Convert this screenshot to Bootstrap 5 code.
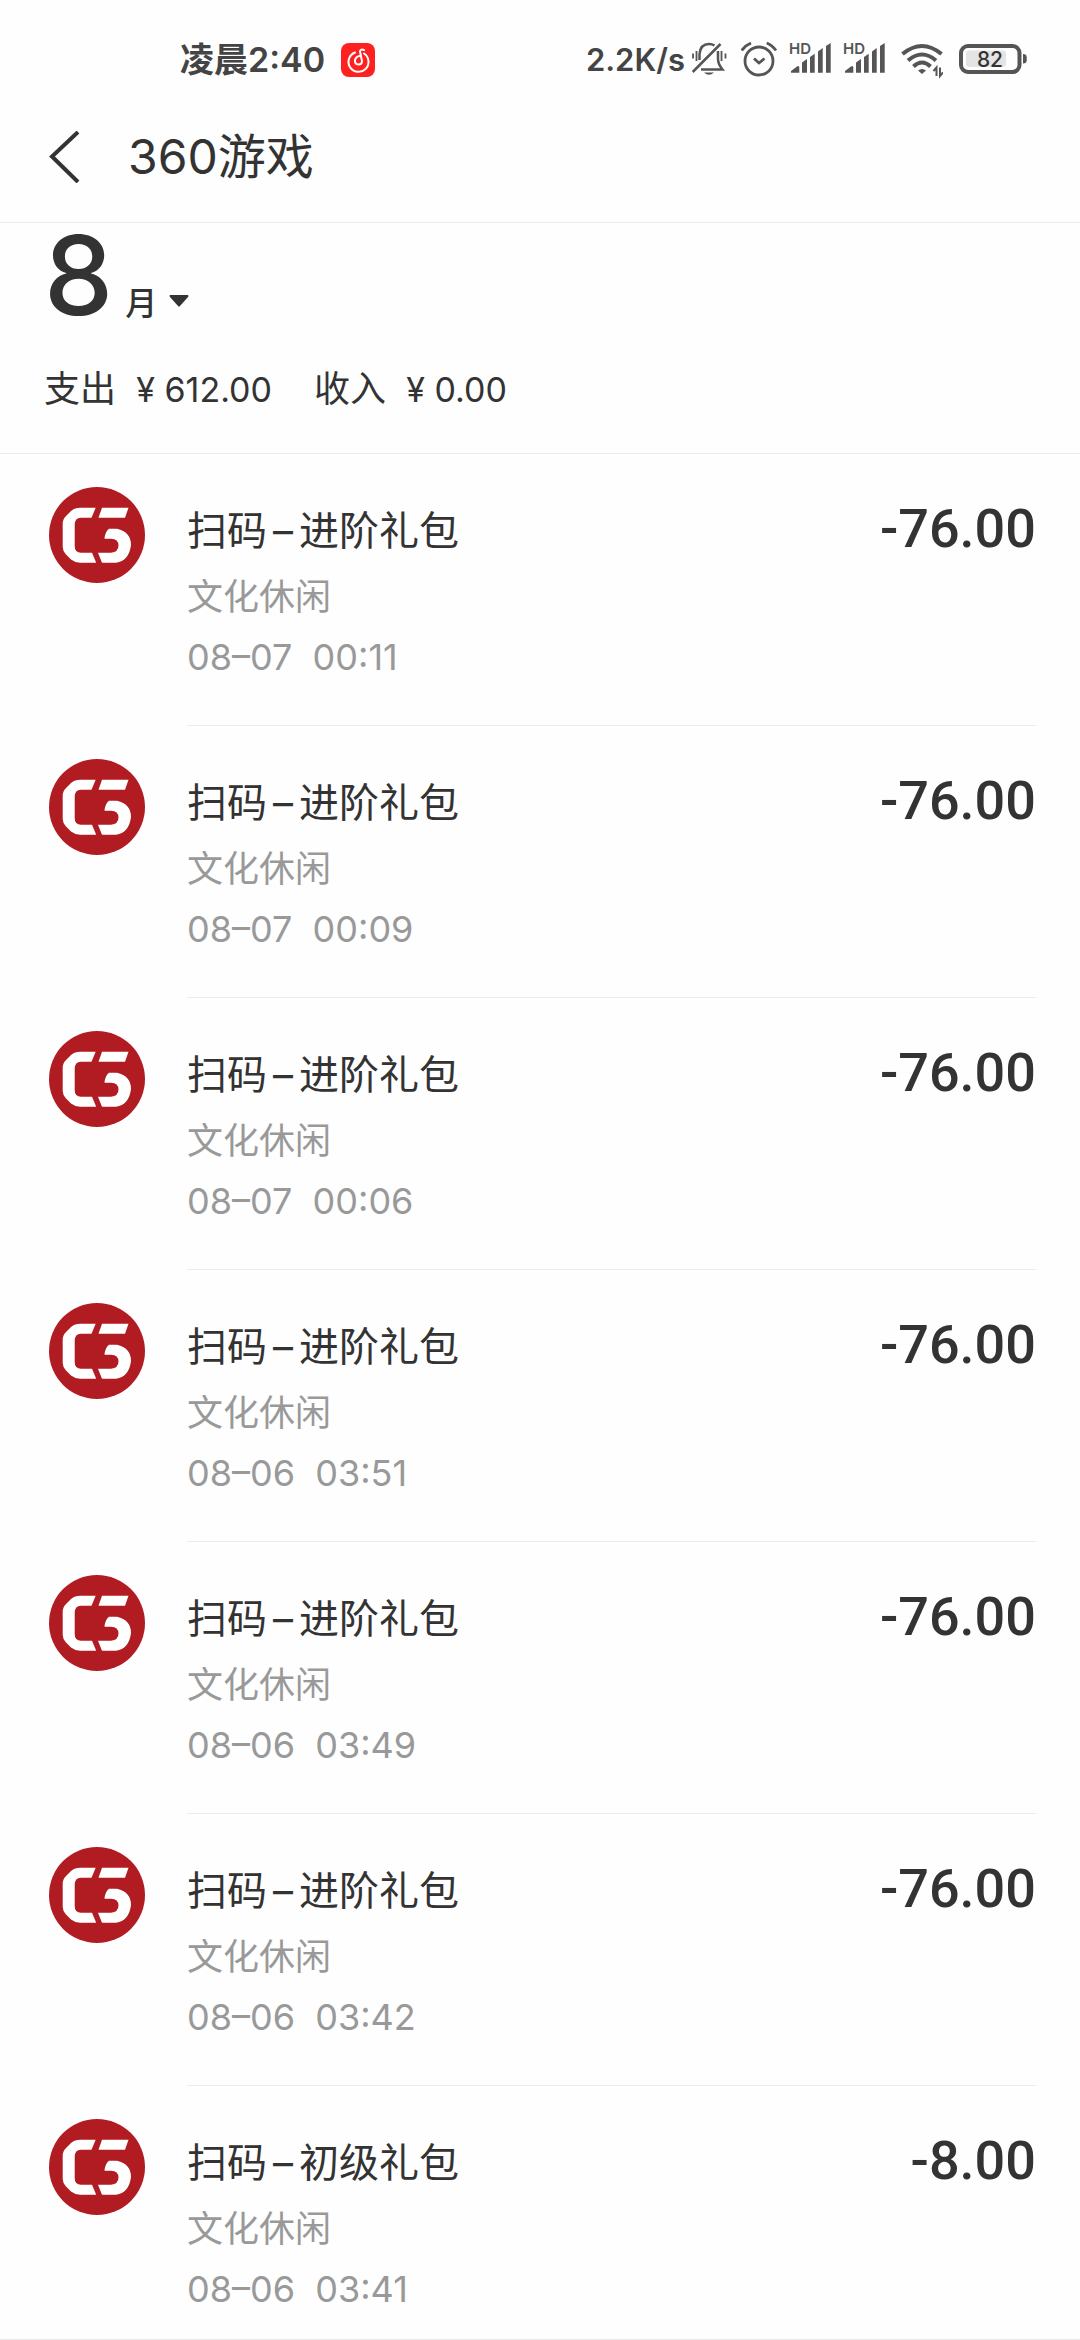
<!DOCTYPE html>
<html lang="zh-CN">
<head>
<meta charset="utf-8">
<meta name="viewport" content="width=device-width, initial-scale=1">
<title>360游戏</title>
<link href="https://cdn.jsdelivr.net/npm/bootstrap@5.3.0/dist/css/bootstrap.min.css" rel="stylesheet">
<style>
  body { background: #fefefe; color: #333; font-family: Inter, "Noto Sans CJK SC", sans-serif; font-size: 36px; line-height: 60px; }
  .status-bar { height: 92px; padding: 28px 53px 0 180px; font-size: 34px; font-weight: 600; color: #444; }
  .status-icons { gap: 12px; }
  .status-bar svg { display: block; flex: none; }
  .speed { font-size: 31px; margin-right: 6px; }
  .app-header { height: 131px; padding: 0 44px; border-bottom: 1px solid #ebebeb; }
  .back-btn { width: 84px; color: inherit; }
  .app-title { font-size: 48px; line-height: 60px; font-weight: 400; }
  .summary { height: 231px; padding: 4px 44px 0; border-bottom: 1px solid #ebebeb; }
  .month-btn { color: inherit; font-weight: 500; gap: 12px; }
  .month-num { font-size: 110px; line-height: 96px; }
  .month-unit { font-size: 32px; line-height: 40px; }
  .totals { gap: 42px; margin-top: 35px; }
  .sum { font-size: 34px; }
  .record { padding: 0 44px 0 49px; gap: 42px; color: #333; }
  .record:hover { color: #333; }
  .record-logo { width: 96px; height: 96px; margin-top: 33px; flex: none; }
  .record-body { height: 272px; padding-top: 47px; border-bottom: 1px solid #ebebeb; }
  .record-title { font-size: 40px; margin-bottom: 6px; }
  .record-title span { margin: 0 6px; }
  .record-note { color: #999; }
  .amount { font-family: Roboto, sans-serif; font-size: 54px; font-weight: 500; line-height: 56px; }
  .records li:last-child { border-bottom: 1px solid #ebebeb; }
  .records li:last-child .record-body { height: 253px; border-bottom: 0; }
</style>
</head>
<body>
<svg class="d-none" aria-hidden="true">
  <symbol id="logo" viewBox="0 0 96 96">
    <circle cx="48" cy="48" r="48" fill="#b11b22"/>
    <g fill="#fff">
      <path d="M46.700 20.700H31Q26 20.700 22 24L17 29Q13.700 32 13.700 37V60Q13.700 64 17 67.500L22 72.500Q26 75.700 31 75.700H47.200L43 65.700H32Q25.700 65.700 25.700 59V38Q25.700 30.700 32 30.700H42.500Z"/>
      <path d="M53 20.700H79.500L76 30.700H49.500Z"/>
      <path d="M60 41.700H68Q82 45 82 58Q80 74 67 75.700H53L49 65.700H62Q69.500 65 69.500 58.500Q69.500 52 62 51.700H55.500Q56 45 60 41.700Z"/>
    </g>
  </symbol>
  <symbol id="signal" viewBox="0 0 42 40">
    <text x="0" y="14" font-family="Inter, sans-serif" font-size="15" font-weight="600" fill="#555">HD</text>
    <path d="M2 32.700V31L8 26.500Q10.300 25 10.300 27.500V32.700ZM13 32.700V22.500L18 19V32.700ZM21 32.700V17L25.700 13.700V32.700ZM29 32.700V11.500L33.700 8V32.700ZM37 32.700V6L41.700 3V32.700Z" fill="#555"/>
  </symbol>
</svg>

<div class="status-bar d-flex justify-content-between">
  <div class="d-flex align-items-center">
    <span>凌晨2:40</span>
    <svg class="ms-3" width="34" height="34" viewBox="0 0 34 34" aria-hidden="true">
      <rect width="34" height="34" rx="8" fill="#fd221f"/>
      <path d="M14 9.500A10 10 0 1 0 23 10.500M23 7Q19.500 5.500 19 8.500L21 18Q21 21.500 17.500 21.500Q13.500 21 14 17Q15 13 20 12.700" fill="none" stroke="#fff" stroke-width="2" stroke-linecap="round"/>
    </svg>
  </div>
  <div class="d-flex align-items-center">
    <span class="speed">2.2K/s</span>
    <div class="status-icons d-flex align-items-center">
      <svg width="38" height="40" viewBox="0 0 38 40" fill="none" stroke="#555" stroke-width="2.500" aria-hidden="true">
        <path d="M8.500 20V14Q9.500 4 18 4Q21 4 23.500 5.500M27 11V19Q27 24 31.500 29.500H10M1.700 32L29.500 4"/>
        <path d="M2 13.500V18.500M5.500 11V21M30.500 11V21M34.500 13.500V18.500" stroke-width="1.800"/>
        <path d="M13 32.500H23Q18 37 13 32.500Z" fill="#555" stroke="none"/>
      </svg>
      <svg width="36" height="40" viewBox="1 0 36 40" fill="none" stroke="#555" stroke-width="2.800" aria-hidden="true">
        <circle cx="19" cy="21" r="14"/>
        <path d="M1.700 10.500Q5 5.500 11 3M26.700 3Q32 5 36 10.500M14 18.500L19 23L24.500 18.500"/>
      </svg>
      <svg width="42" height="40" aria-hidden="true"><use href="#signal"/></svg>
      <svg width="42" height="40" aria-hidden="true"><use href="#signal"/></svg>
      <svg width="46" height="40" viewBox="-4 0 46 40" fill="none" stroke="#555" stroke-width="4" aria-hidden="true">
        <path d="M1.500 14Q21 -2 40.500 14M7 20.500Q21 8.500 35 20.500M12.500 26.500Q21 18.500 29.500 26.500"/>
        <path d="M17 30.500Q21 27.500 25 30.500L21 34Z" fill="#555" stroke="none"/>
        <path d="M35.500 36V27.500L32.500 31M39 27.500V36L42 32.500" stroke-width="2"/>
      </svg>
      <svg width="72" height="40" viewBox="-3 0 72 40" aria-hidden="true">
        <rect x="8" y="10.500" width="40" height="16.500" rx="3" fill="#e4e4e4"/>
        <rect x="3" y="6" width="58.500" height="26" rx="7" fill="none" stroke="#555" stroke-width="4"/>
        <path d="M65 14Q68.700 14 68.700 17V20.500Q68.700 23.500 65 23.500Z" fill="#555"/>
        <text x="32" y="27" text-anchor="middle" font-family="Inter, sans-serif" font-size="21" font-weight="500" fill="#333">82</text>
      </svg>
    </div>
  </div>
</div>

<header class="app-header d-flex align-items-center">
  <button type="button" class="back-btn btn border-0 p-0 text-start" aria-label="返回">
    <svg class="d-block" width="40" height="52" viewBox="0 0 40 52" fill="none" stroke="#333" stroke-width="4"><path d="M34 1L8 25.500L34 51"/></svg>
  </button>
  <h1 class="app-title m-0">360游戏</h1>
</header>

<section class="summary">
  <button type="button" class="month-btn btn border-0 p-0 d-flex align-items-baseline">
    <span class="month-num">8</span>
    <span class="month-unit">月</span>
    <svg width="20" height="20" viewBox="0 0 20 20" aria-hidden="true"><path d="M1 0H19Q20 1 19 2L11 11Q10 12 9 11L1 2Q0 1 1 0Z" fill="#333"/></svg>
  </button>
  <div class="totals d-flex">
    <span>支出&nbsp; <span class="sum">¥ 612.00</span></span>
    <span>收入&nbsp; <span class="sum">¥ 0.00</span></span>
  </div>
</section>

<main>
  <ul class="records list-unstyled m-0">
    <li><a href="#" class="record d-flex text-decoration-none">
      <svg class="record-logo" aria-hidden="true"><use href="#logo"/></svg>
      <div class="record-body d-flex flex-grow-1 justify-content-between">
        <div><div class="record-title">扫码<span>–</span>进阶礼包</div><div class="record-note">文化休闲</div><div class="record-note">08–07&nbsp; 00:11</div></div>
        <div class="amount">-76.00</div>
      </div></a></li>
    <li><a href="#" class="record d-flex text-decoration-none">
      <svg class="record-logo" aria-hidden="true"><use href="#logo"/></svg>
      <div class="record-body d-flex flex-grow-1 justify-content-between">
        <div><div class="record-title">扫码<span>–</span>进阶礼包</div><div class="record-note">文化休闲</div><div class="record-note">08–07&nbsp; 00:09</div></div>
        <div class="amount">-76.00</div>
      </div></a></li>
    <li><a href="#" class="record d-flex text-decoration-none">
      <svg class="record-logo" aria-hidden="true"><use href="#logo"/></svg>
      <div class="record-body d-flex flex-grow-1 justify-content-between">
        <div><div class="record-title">扫码<span>–</span>进阶礼包</div><div class="record-note">文化休闲</div><div class="record-note">08–07&nbsp; 00:06</div></div>
        <div class="amount">-76.00</div>
      </div></a></li>
    <li><a href="#" class="record d-flex text-decoration-none">
      <svg class="record-logo" aria-hidden="true"><use href="#logo"/></svg>
      <div class="record-body d-flex flex-grow-1 justify-content-between">
        <div><div class="record-title">扫码<span>–</span>进阶礼包</div><div class="record-note">文化休闲</div><div class="record-note">08–06&nbsp; 03:51</div></div>
        <div class="amount">-76.00</div>
      </div></a></li>
    <li><a href="#" class="record d-flex text-decoration-none">
      <svg class="record-logo" aria-hidden="true"><use href="#logo"/></svg>
      <div class="record-body d-flex flex-grow-1 justify-content-between">
        <div><div class="record-title">扫码<span>–</span>进阶礼包</div><div class="record-note">文化休闲</div><div class="record-note">08–06&nbsp; 03:49</div></div>
        <div class="amount">-76.00</div>
      </div></a></li>
    <li><a href="#" class="record d-flex text-decoration-none">
      <svg class="record-logo" aria-hidden="true"><use href="#logo"/></svg>
      <div class="record-body d-flex flex-grow-1 justify-content-between">
        <div><div class="record-title">扫码<span>–</span>进阶礼包</div><div class="record-note">文化休闲</div><div class="record-note">08–06&nbsp; 03:42</div></div>
        <div class="amount">-76.00</div>
      </div></a></li>
    <li><a href="#" class="record d-flex text-decoration-none">
      <svg class="record-logo" aria-hidden="true"><use href="#logo"/></svg>
      <div class="record-body d-flex flex-grow-1 justify-content-between">
        <div><div class="record-title">扫码<span>–</span>初级礼包</div><div class="record-note">文化休闲</div><div class="record-note">08–06&nbsp; 03:41</div></div>
        <div class="amount">-8.00</div>
      </div></a></li>
  </ul>
</main>
<script src="https://cdn.jsdelivr.net/npm/bootstrap@5.3.0/dist/js/bootstrap.bundle.min.js"></script>
</body>
</html>
